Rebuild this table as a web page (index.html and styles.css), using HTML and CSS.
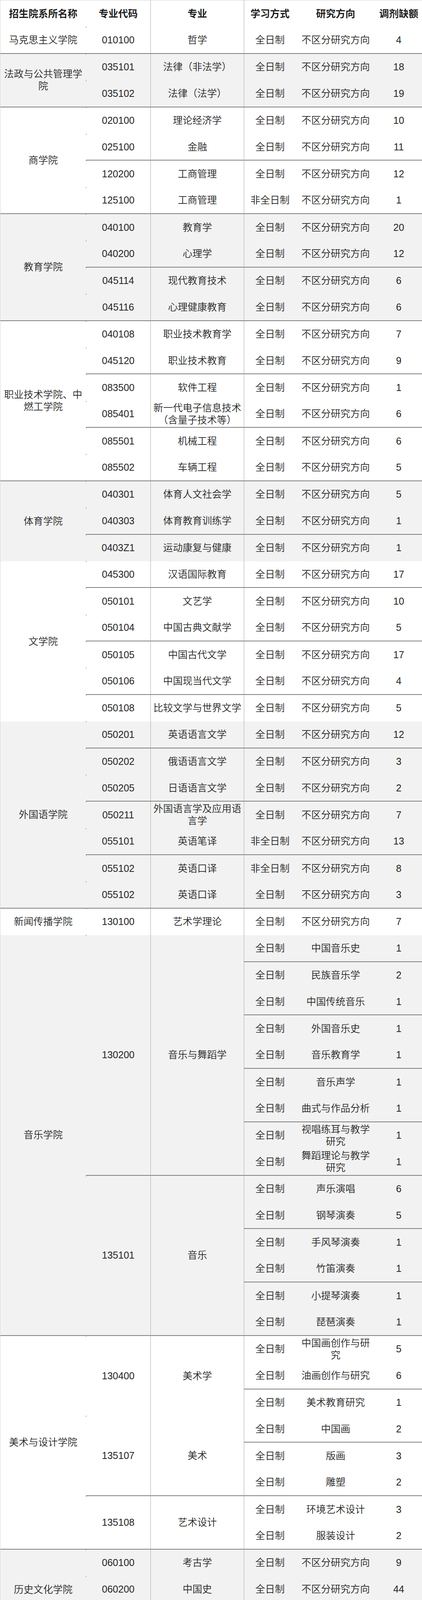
FILE: index.html
```html
<!DOCTYPE html>
<html lang="zh-CN">
<head>
<meta charset="utf-8">
<title>调剂缺额</title>
<link rel="stylesheet" href="styles.css">
</head>
<body>
<div class="sheet">
  <div class="head c1">招生院系所名称</div><div class="head c2">专业代码</div><div class="head c3">专业</div><div class="head c4">学习方式</div><div class="head c5">研究方向</div><div class="head c6">调剂缺额</div>

  <div class="grp">
    <div class="c1 b">马克思主义学院</div>
    <div class="c2 b">010100</div><div class="c3 b">哲学</div><div class="c4 b">全日制</div><div class="c5 b">不区分研究方向</div><div class="c6 b">4</div>
  </div>

  <div class="grp gray">
    <div class="c1 s2 b">法政与公共管理学院</div>
    <div class="c2">035101</div><div class="c3">法律（非法学）</div><div class="c4">全日制</div><div class="c5">不区分研究方向</div><div class="c6">18</div>
    <div class="c2 b">035102</div><div class="c3 b">法律（法学）</div><div class="c4 b">全日制</div><div class="c5 b">不区分研究方向</div><div class="c6 b">19</div>
  </div>

  <div class="grp">
    <div class="c1 s4 b">商学院</div>
    <div class="c2">020100</div><div class="c3">理论经济学</div><div class="c4">全日制</div><div class="c5">不区分研究方向</div><div class="c6">10</div>
    <div class="c2 b">025100</div><div class="c3 b">金融</div><div class="c4 b">全日制</div><div class="c5 b">不区分研究方向</div><div class="c6 b">11</div>
    <div class="c2">120200</div><div class="c3">工商管理</div><div class="c4">全日制</div><div class="c5">不区分研究方向</div><div class="c6">12</div>
    <div class="c2 b">125100</div><div class="c3 b">工商管理</div><div class="c4 b">非全日制</div><div class="c5 b">不区分研究方向</div><div class="c6 b">1</div>
  </div>

  <div class="grp gray">
    <div class="c1 s4 b">教育学院</div>
    <div class="c2">040100</div><div class="c3">教育学</div><div class="c4">全日制</div><div class="c5">不区分研究方向</div><div class="c6">20</div>
    <div class="c2 b">040200</div><div class="c3 b">心理学</div><div class="c4 b">全日制</div><div class="c5 b">不区分研究方向</div><div class="c6 b">12</div>
    <div class="c2">045114</div><div class="c3">现代教育技术</div><div class="c4">全日制</div><div class="c5">不区分研究方向</div><div class="c6">6</div>
    <div class="c2 b">045116</div><div class="c3 b">心理健康教育</div><div class="c4 b">全日制</div><div class="c5 b">不区分研究方向</div><div class="c6 b">6</div>
  </div>

  <div class="grp">
    <div class="c1 s6 b">职业技术学院、中燃工学院</div>
    <div class="c2">040108</div><div class="c3">职业技术教育学</div><div class="c4">全日制</div><div class="c5">不区分研究方向</div><div class="c6">7</div>
    <div class="c2 b">045120</div><div class="c3 b">职业技术教育</div><div class="c4 b">全日制</div><div class="c5 b">不区分研究方向</div><div class="c6 b">9</div>
    <div class="c2">083500</div><div class="c3">软件工程</div><div class="c4">全日制</div><div class="c5">不区分研究方向</div><div class="c6">1</div>
    <div class="c2 b">085401</div><div class="c3 b">新一代电子信息技术（含量子技术等）</div><div class="c4 b">全日制</div><div class="c5 b">不区分研究方向</div><div class="c6 b">6</div>
    <div class="c2">085501</div><div class="c3">机械工程</div><div class="c4">全日制</div><div class="c5">不区分研究方向</div><div class="c6">6</div>
    <div class="c2 b">085502</div><div class="c3 b">车辆工程</div><div class="c4 b">全日制</div><div class="c5 b">不区分研究方向</div><div class="c6 b">5</div>
  </div>

  <div class="grp gray">
    <div class="c1 s3">体育学院</div>
    <div class="c2">040301</div><div class="c3">体育人文社会学</div><div class="c4">全日制</div><div class="c5">不区分研究方向</div><div class="c6">5</div>
    <div class="c2 b">040303</div><div class="c3 b">体育教育训练学</div><div class="c4 b">全日制</div><div class="c5 b">不区分研究方向</div><div class="c6 b">1</div>
    <div class="c2">0403Z1</div><div class="c3">运动康复与健康</div><div class="c4">全日制</div><div class="c5">不区分研究方向</div><div class="c6">1</div>
  </div>

  <div class="grp">
    <div class="c1 s6">文学院</div>
    <div class="c2 b">045300</div><div class="c3 b">汉语国际教育</div><div class="c4 b">全日制</div><div class="c5 b">不区分研究方向</div><div class="c6 b">17</div>
    <div class="c2">050101</div><div class="c3">文艺学</div><div class="c4">全日制</div><div class="c5">不区分研究方向</div><div class="c6">10</div>
    <div class="c2 b">050104</div><div class="c3 b">中国古典文献学</div><div class="c4 b">全日制</div><div class="c5 b">不区分研究方向</div><div class="c6 b">5</div>
    <div class="c2">050105</div><div class="c3">中国古代文学</div><div class="c4">全日制</div><div class="c5">不区分研究方向</div><div class="c6">17</div>
    <div class="c2 b">050106</div><div class="c3 b">中国现当代文学</div><div class="c4 b">全日制</div><div class="c5 b">不区分研究方向</div><div class="c6 b">4</div>
    <div class="c2">050108</div><div class="c3">比较文学与世界文学</div><div class="c4">全日制</div><div class="c5">不区分研究方向</div><div class="c6">5</div>
  </div>

  <div class="grp gray">
    <div class="c1 s7 b">外国语学院</div>
    <div class="c2 b">050201</div><div class="c3 b">英语语言文学</div><div class="c4 b">全日制</div><div class="c5 b">不区分研究方向</div><div class="c6 b">12</div>
    <div class="c2">050202</div><div class="c3">俄语语言文学</div><div class="c4">全日制</div><div class="c5">不区分研究方向</div><div class="c6">3</div>
    <div class="c2 b">050205</div><div class="c3 b">日语语言文学</div><div class="c4 b">全日制</div><div class="c5 b">不区分研究方向</div><div class="c6 b">2</div>
    <div class="c2">050211</div><div class="c3">外国语言学及应用语言学</div><div class="c4">全日制</div><div class="c5">不区分研究方向</div><div class="c6">7</div>
    <div class="c2 b">055101</div><div class="c3 b">英语笔译</div><div class="c4 b">非全日制</div><div class="c5 b">不区分研究方向</div><div class="c6 b">13</div>
    <div class="c2">055102</div><div class="c3">英语口译</div><div class="c4">非全日制</div><div class="c5">不区分研究方向</div><div class="c6">8</div>
    <div class="c2 b">055102</div><div class="c3 b">英语口译</div><div class="c4 b">全日制</div><div class="c5 b">不区分研究方向</div><div class="c6 b">3</div>
  </div>

  <div class="grp">
    <div class="c1">新闻传播学院</div>
    <div class="c2">130100</div><div class="c3">艺术学理论</div><div class="c4">全日制</div><div class="c5">不区分研究方向</div><div class="c6">7</div>
  </div>

  <div class="grp gray">
    <div class="c1 s15 b">音乐学院</div>
    <div class="c2 s9 b">130200</div><div class="c3 s9 b">音乐与舞蹈学</div><div class="c4 b">全日制</div><div class="c5 b">中国音乐史</div><div class="c6 b">1</div>
    <div class="c4">全日制</div><div class="c5">民族音乐学</div><div class="c6">2</div>
    <div class="c4 b">全日制</div><div class="c5 b">中国传统音乐</div><div class="c6 b">1</div>
    <div class="c4">全日制</div><div class="c5">外国音乐史</div><div class="c6">1</div>
    <div class="c4 b">全日制</div><div class="c5 b">音乐教育学</div><div class="c6 b">1</div>
    <div class="c4">全日制</div><div class="c5">音乐声学</div><div class="c6">1</div>
    <div class="c4 b">全日制</div><div class="c5 b">曲式与作品分析</div><div class="c6 b">1</div>
    <div class="c4">全日制</div><div class="c5">视唱练耳与教学研究</div><div class="c6">1</div>
    <div class="c4 b">全日制</div><div class="c5 b">舞蹈理论与教学研究</div><div class="c6 b">1</div>
    <div class="c2 s6 b">135101</div><div class="c3 s6 b">音乐</div><div class="c4">全日制</div><div class="c5">声乐演唱</div><div class="c6">6</div>
    <div class="c4 b">全日制</div><div class="c5 b">钢琴演奏</div><div class="c6 b">5</div>
    <div class="c4">全日制</div><div class="c5">手风琴演奏</div><div class="c6">1</div>
    <div class="c4 b">全日制</div><div class="c5 b">竹笛演奏</div><div class="c6 b">1</div>
    <div class="c4">全日制</div><div class="c5">小提琴演奏</div><div class="c6">1</div>
    <div class="c4 b">全日制</div><div class="c5 b">琵琶演奏</div><div class="c6 b">1</div>
  </div>

  <div class="grp">
    <div class="c1 s8 b">美术与设计学院</div>
    <div class="c2 s3">130400</div><div class="c3 s3">美术学</div><div class="c4">全日制</div><div class="c5">中国画创作与研究</div><div class="c6">5</div>
    <div class="c4 b">全日制</div><div class="c5 b">油画创作与研究</div><div class="c6 b">6</div>
    <div class="c4">全日制</div><div class="c5">美术教育研究</div><div class="c6">1</div>
    <div class="c2 s3 b">135107</div><div class="c3 s3 b">美术</div><div class="c4 b">全日制</div><div class="c5 b">中国画</div><div class="c6 b">2</div>
    <div class="c4">全日制</div><div class="c5">版画</div><div class="c6">3</div>
    <div class="c4 b">全日制</div><div class="c5 b">雕塑</div><div class="c6 b">2</div>
    <div class="c2 s2 b">135108</div><div class="c3 s2 b">艺术设计</div><div class="c4">全日制</div><div class="c5">环境艺术设计</div><div class="c6">3</div>
    <div class="c4 b">全日制</div><div class="c5 b">服装设计</div><div class="c6 b">2</div>
  </div>

  <div class="grp gray">
    <div class="c1 s3">历史文化学院</div>
    <div class="c2">060100</div><div class="c3">考古学</div><div class="c4">全日制</div><div class="c5">不区分研究方向</div><div class="c6">9</div>
    <div class="c2 b">060200</div><div class="c3 b">中国史</div><div class="c4 b">全日制</div><div class="c5 b">不区分研究方向</div><div class="c6 b">44</div>
    <div class="c2">060300</div><div class="c3">世界史</div><div class="c4">全日制</div><div class="c5">不区分研究方向</div><div class="c6">9</div>
  </div>

  <div class="grp">
    <div class="c1 s2">物理学院</div>
    <div class="c2 b">040102</div><div class="c3 b">课程与教学论</div><div class="c4 b">全日制</div><div class="c5 b">不区分研究方向</div><div class="c6 b">2</div>
    <div class="c2">070400</div><div class="c3">天文学</div><div class="c4">全日制</div><div class="c5">不区分研究方向</div><div class="c6">2</div>
  </div>

  <div class="grp gray">
    <div class="c1 s5 b">化学与材料科学学院</div>
    <div class="c2 b">040102</div><div class="c3 b">课程与教学论</div><div class="c4 b">全日制</div><div class="c5 b">不区分研究方向</div><div class="c6 b">1</div>
    <div class="c2">045117</div><div class="c3">科学与技术教育</div><div class="c4">全日制</div><div class="c5">不区分研究方向</div><div class="c6">2</div>
    <div class="c2 b">070302</div><div class="c3 b">分析化学</div><div class="c4 b">全日制</div><div class="c5 b">不区分研究方向</div><div class="c6 b">2</div>
    <div class="c2">085600</div><div class="c3">材料与化工</div><div class="c4">全日制</div><div class="c5">不区分研究方向</div><div class="c6">13</div>
    <div class="c2 b">105500</div><div class="c3 b">药学</div><div class="c4 b">全日制</div><div class="c5 b">不区分研究方向</div><div class="c6 b">14</div>
  </div>

  <div class="grp">
    <div class="c1">地理科学学院</div>
    <div class="c2">085700</div><div class="c3">资源与环境</div><div class="c4">全日制</div><div class="c5">不区分研究方向</div><div class="c6">16</div>
  </div>

  <div class="grp gray">
    <div class="c1 s12">生命科学学院</div>
    <div class="c2 s3 b">071300</div><div class="c3 s3 b">生态学</div><div class="c4 b">全日制</div><div class="c5 b">生态系统生态学</div><div class="c6 b">1</div>
    <div class="c4">全日制</div><div class="c5">植物生态学</div><div class="c6">3</div>
    <div class="c4 b">全日制</div><div class="c5 b">微生物生态学</div><div class="c6 b">3</div>
    <div class="c2 s4 b">086000</div><div class="c3 s4 b">生物与医药</div><div class="c4">全日制</div><div class="c5">生物医学工程</div><div class="c6">3</div>
    <div class="c4 b">全日制</div><div class="c5 b">制药工程</div><div class="c6 b">4</div>
    <div class="c4">全日制</div><div class="c5">生物技术与工程</div><div class="c6">4</div>
    <div class="c4 b">全日制</div><div class="c5 b">媒介动物生态与药物防治工程</div><div class="c6 b">4</div>
    <div class="c2">040102</div><div class="c3">课程与教学论</div><div class="c4">全日制</div><div class="c5">不区分研究方向</div><div class="c6">1</div>
    <div class="c2 b">071002</div><div class="c3 b">动物学</div><div class="c4 b">全日制</div><div class="c5 b">不区分研究方向</div><div class="c6 b">5</div>
    <div class="c2">071005</div><div class="c3">微生物学</div><div class="c4">全日制</div><div class="c5">不区分研究方向</div><div class="c6">2</div>
    <div class="c2 b">071009</div><div class="c3 b">细胞生物学</div><div class="c4 b">全日制</div><div class="c5 b">不区分研究方向</div><div class="c6 b">12</div>
    <div class="c2">0710Z1</div><div class="c3">化学生物学</div><div class="c4">全日制</div><div class="c5">不区分研究方向</div><div class="c6">1</div>
  </div>

  <div class="grp">
    <div class="c1 s2">计算机与网络空间安全学院</div>
    <div class="c2 b">081200</div><div class="c3 b">计算机科学与技术</div><div class="c4 b">全日制</div><div class="c5 b">不区分研究方向</div><div class="c6 b">8</div>
    <div class="c2">083900</div><div class="c3">网络空间安全</div><div class="c4">全日制</div><div class="c5">不区分研究方向</div><div class="c6">8</div>
  </div>

  <div class="grp gray">
    <div class="c1 s2">家政学院（学前教育系）</div>
    <div class="c2 b">040105</div><div class="c3 b">学前教育学</div><div class="c4 b">全日制</div><div class="c5 b">不区分研究方向</div><div class="c6 b">4</div>
    <div class="c2">125400</div><div class="c3">旅游管理</div><div class="c4">全日制</div><div class="c5">不区分研究方向</div><div class="c6">3</div>
  </div>

  <div class="grp">
    <div class="c1 s4">中国共产党革命精神与文化资源研究中心</div>
    <div class="c2 b">030200</div><div class="c3 b">政治学</div><div class="c4 b">全日制</div><div class="c5 b">不区分研究方向</div><div class="c6 b">3</div>
    <div class="c2">030500</div><div class="c3">马克思主义理论</div><div class="c4">全日制</div><div class="c5">不区分研究方向</div><div class="c6">1</div>
    <div class="c2 b">050202</div><div class="c3 b">俄语语言文学</div><div class="c4 b">全日制</div><div class="c5 b">不区分研究方向</div><div class="c6 b">1</div>
    <div class="c2">060200</div><div class="c3">中国史</div><div class="c4">全日制</div><div class="c5">不区分研究方向</div><div class="c6">2</div>
  </div>

  <div class="grp gray">
    <div class="c1 s4">国别和区域研究中心</div>
    <div class="c2 b">020100</div><div class="c3 b">理论经济学</div><div class="c4 b">全日制</div><div class="c5 b">不区分研究方向</div><div class="c6 b">1</div>
    <div class="c2">030200</div><div class="c3">政治学</div><div class="c4">全日制</div><div class="c5">不区分研究方向</div><div class="c6">1</div>
    <div class="c2 b">030500</div><div class="c3 b">马克思主义理论</div><div class="c4 b">全日制</div><div class="c5 b">不区分研究方向</div><div class="c6 b">1</div>
    <div class="c2">060300</div><div class="c3">世界史</div><div class="c4">全日制</div><div class="c5">不区分研究方向</div><div class="c6">3</div>
  </div>

  <div class="grp">
    <div class="c1 s6">教师教育学院</div>
    <div class="c2 b">045107</div><div class="c3 b">学科教学（生物）</div><div class="c4 b">全日制</div><div class="c5 b">不区分研究方向</div><div class="c6 b">7</div>
    <div class="c2">045109</div><div class="c3">学科教学（历史）</div><div class="c4">全日制</div><div class="c5">不区分研究方向</div><div class="c6">1</div>
    <div class="c2 b">045110</div><div class="c3 b">学科教学（地理）</div><div class="c4 b">全日制</div><div class="c5 b">不区分研究方向</div><div class="c6 b">2</div>
    <div class="c2">045111</div><div class="c3">学科教学（音乐）</div><div class="c4">全日制</div><div class="c5">不区分研究方向</div><div class="c6">3</div>
    <div class="c2 b">045112</div><div class="c3 b">学科教学（体育）</div><div class="c4 b">全日制</div><div class="c5 b">不区分研究方向</div><div class="c6 b">6</div>
    <div class="c2">045113</div><div class="c3">学科教学（美术）</div><div class="c4">全日制</div><div class="c5">不区分研究方向</div><div class="c6">5</div>
  </div>

  <div class="grp gray">
    <div class="c1 s2">初等教育系</div>
    <div class="c2 b">0401Z2</div><div class="c3 b">少年儿童组织与思想意识教育</div><div class="c4 b">全日制</div><div class="c5 b">不区分研究方向</div><div class="c6 b">2</div>
    <div class="c2">045115</div><div class="c3">小学教育</div><div class="c4">非全日制</div><div class="c5">不区分研究方向</div><div class="c6">8</div>
  </div>
</div>
</body>
</html>
```

FILE: styles.css
```css
* {
  box-sizing: border-box;
}

html,
body {
  margin: 0;
  padding: 0;
  background: #ffffff;
}

.sheet {
  display: grid;
  grid-template-columns: 219px 165px 239px 133px 204px 119px;
  grid-template-rows: repeat(101, 68.38px);
  width: 1080px;
  overflow: hidden;
  border-top: 1px solid #d4d4d4;
  border-left: 1px solid #d4d4d4;
  font-family: "Liberation Sans", "Noto Sans CJK SC", sans-serif;
  font-size: 25px;
  font-weight: 350;
  line-height: 31px;
  color: #262626;
}

.sheet > .grp {
  display: contents;
}

.head,
.grp > div {
  display: flex;
  align-items: center;
  justify-content: center;
  text-align: center;
  background: #ffffff;
  min-width: 0;
  min-height: 0;
}

.grp.gray > div {
  background: #f2f2f2;
}

.head {
  font-weight: 700;
  color: #1e1e1e;
}

.c1 {
  padding: 0 8px;
}

.c2 {
  position: relative;
}

.grp .c2::before {
  content: "";
  position: absolute;
  left: 0;
  top: -1px;
  width: 1px;
  height: 3px;
  background: #3f8f3a;
}

.c3 {
  padding: 0 5px;
  border-left: 1px solid #a8a8a8;
}

.c4 {
  border-left: 1px solid #a8a8a8;
}

.c5 {
  padding: 0 10px;
}

.b {
  border-bottom: 2px solid #808080;
}

.s2 { grid-row: span 2; }
.s3 { grid-row: span 3; }
.s4 { grid-row: span 4; }
.s5 { grid-row: span 5; }
.s6 { grid-row: span 6; }
.s7 { grid-row: span 7; }
.s8 { grid-row: span 8; }
.s9 { grid-row: span 9; }
.s12 { grid-row: span 12; }
.s15 { grid-row: span 15; }
```
